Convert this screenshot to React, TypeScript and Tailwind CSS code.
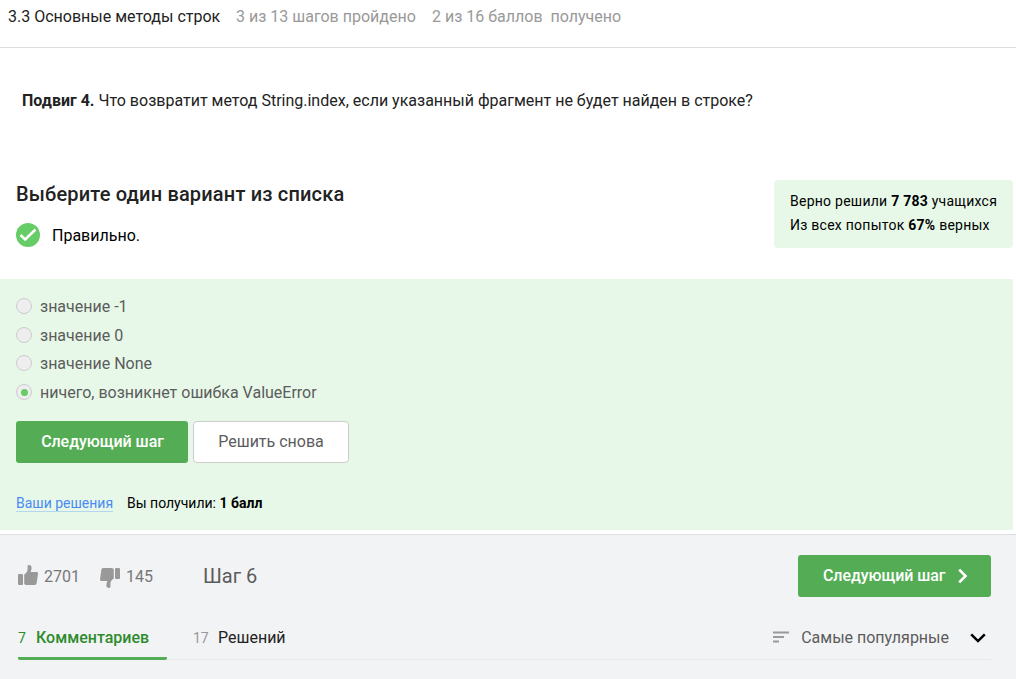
import React from "react";

const Radio = ({ label, checked, className }: { label: string; checked?: boolean; className: string }) => (
  <label className={`flex items-start gap-2 text-[16px] leading-6 text-[#5c5c5c] ${className}`}>
    <span className="mt-[3px] flex size-4 shrink-0 items-center justify-center rounded-full border border-[#ccc] bg-[#eee]">
      {checked && <span className="size-[7px] rounded-full bg-[#66cc66]" />}
    </span>
    <span>{label}</span>
  </label>
);

const Thumb = ({ down }: { down?: boolean }) => (
  <svg viewBox="0 0 20 20" className={`size-5 shrink-0 ${down ? "mt-1 rotate-180" : "-mt-0.5"}`} fill="#999">
    <rect x="0" y="9" width="5" height="11" rx="1" />
    <path d="M6.200 9.600C8 8.400 9.600 6.600 9.600 4.600V1.200C9.600.5 10.200 0 11 0c1.700 0 2.600 1.100 2.600 2.800 0 1.600-.4 3-1 4.200h6c.9 0 1.500.7 1.400 1.600l-1.300 9.500c-.1 1.100-.9 1.900-2 1.900H8.200c-1.100 0-2-.9-2-2z" />
  </svg>
);

export default function App() {
  return (
    <div className="flex h-[679px] w-[1016px] flex-col overflow-hidden bg-white font-[Roboto,sans-serif] text-[16px] leading-6 whitespace-nowrap text-[#222]">
      <header className="flex h-12 shrink-0 border-b border-[#ddd] pt-[5px] pl-2 text-[#999]">
        <span className="w-[228px] text-[#222]">3.3 Основные методы строк</span>
        <span className="w-[196px]">3 из 13 шагов пройдено</span>
        <span>2 из 16 баллов&nbsp; получено</span>
      </header>

      <main className="flex h-[486px] shrink-0 flex-col">
        <p className="h-[132px] shrink-0 pt-[41px] pl-[22px]">
          <b>Подвиг 4.</b> Что возвратит метод String.index, если указанный фрагмент не будет найден в строке?
        </p>

        <section className="flex h-[99px] shrink-0 items-start justify-between pr-[3px] pl-4">
          <div>
            <h2 className="text-[20px] leading-7 font-medium tracking-[0.17px]">Выберите один вариант из списка</h2>
            <div className="mt-[15px] flex items-start gap-3 text-black">
              <svg viewBox="0 0 24 24" className="size-6">
                <circle cx="12" cy="12" r="12" fill="#66cc66" />
                <path d="M4.500 12l4.700 4.500L19.500 6.500" fill="none" stroke="#fff" strokeWidth="2.500" />
              </svg>
              <span className="pt-px">Правильно.</span>
            </div>
          </div>
          <aside className="h-[68px] w-[239px] rounded bg-[#e7f8e9] px-4 pt-[9px] text-[14px] leading-6 tracking-[0.25px] text-black">
            <p>Верно решили <b>7 783</b> учащихся</p>
            <p>Из всех попыток <b>67%</b> верных</p>
          </aside>
        </section>

        <section className="mr-[3px] h-[251px] shrink-0 bg-[#e7f8e9] pt-4 pl-4">
          <Radio label="значение -1" className="mb-[5px]" />
          <Radio label="значение 0" className="mb-1" />
          <Radio label="значение None" className="mb-[5px]" />
          <Radio label="ничего, возникнет ошибка ValueError" checked className="mb-4" />
          <div className="flex gap-[5px]">
            <button className="h-[42px] w-[172px] rounded-[3px] bg-[#54ad54] pl-px font-medium tracking-[-0.06px] text-white">Следующий шаг</button>
            <button className="h-[42px] w-[156px] rounded border border-[#ccc] bg-white text-[#5c5c5c]">Решить снова</button>
          </div>
          <div className="mt-8 flex items-start text-[14px] leading-[17px] text-black">
            <a className="h-[17px] w-[97px] border-b border-[#b3d7ee] text-[#4a8af4]">Ваши решения</a>
            <span className="ml-[14px]">Вы получили: <b>1 балл</b></span>
          </div>
        </section>
      </main>

      <footer className="h-[145px] shrink-0 border-t border-[#ddd] bg-[#f2f3f5] pt-5 pr-[25px] pl-[18px]">
        <div className="flex h-[42px] items-center text-[#777]">
          <Thumb />
          <span className="ml-1.5 w-14 pt-0.5">2701</span>
          <Thumb down />
          <span className="ml-1.5 w-[77px] pt-0.5">145</span>
          <span className="text-[20px] text-[#5c5c5c]">Шаг 6</span>
          <button className="ml-auto flex h-[42px] w-[193px] items-center rounded-[3px] bg-[#54ad54] pl-[25px] font-medium tracking-[-0.08px] text-white">
            Следующий шаг
            <svg viewBox="0 0 10 16" className="ml-[13px] h-4 w-2.5" fill="none" stroke="#fff" strokeWidth="2.600">
              <path d="M1.200 1.700L7.500 8l-6.300 6.300" />
            </svg>
          </button>
        </div>
        <div className="mt-[21px] flex h-[42px] items-start border-b border-[#e7e8ea] pt-2">
          <div className="flex h-[34px] w-[149px] shrink-0 items-start rounded-b-xs border-b-3 border-[#54ad54] font-medium text-[#2e8b2e]">
            <span className="w-[18px] text-[14px] font-normal">7</span>Комментариев
          </div>
          <span className="ml-[26px] w-[25px] text-[14px] text-[#999]">17</span>
          <span>Решений</span>
          <svg viewBox="0 0 16 12" className="mt-[5px] ml-auto h-3 w-4" fill="#999">
            <path d="M0 0.500h16v2H0zM0 5h11v2H0zM0 9.500h6v2H0z" />
          </svg>
          <span className="ml-3 text-[#5c5c5c]">Самые популярные</span>
          <svg viewBox="0 0 16 10" className="mt-[7px] mr-[5px] ml-[21px] h-2.5 w-4" fill="none" stroke="#000" strokeWidth="2.500">
            <path d="M1.200 1.400L8 8.100l6.800-6.700" />
          </svg>
        </div>
      </footer>
    </div>
  );
}
